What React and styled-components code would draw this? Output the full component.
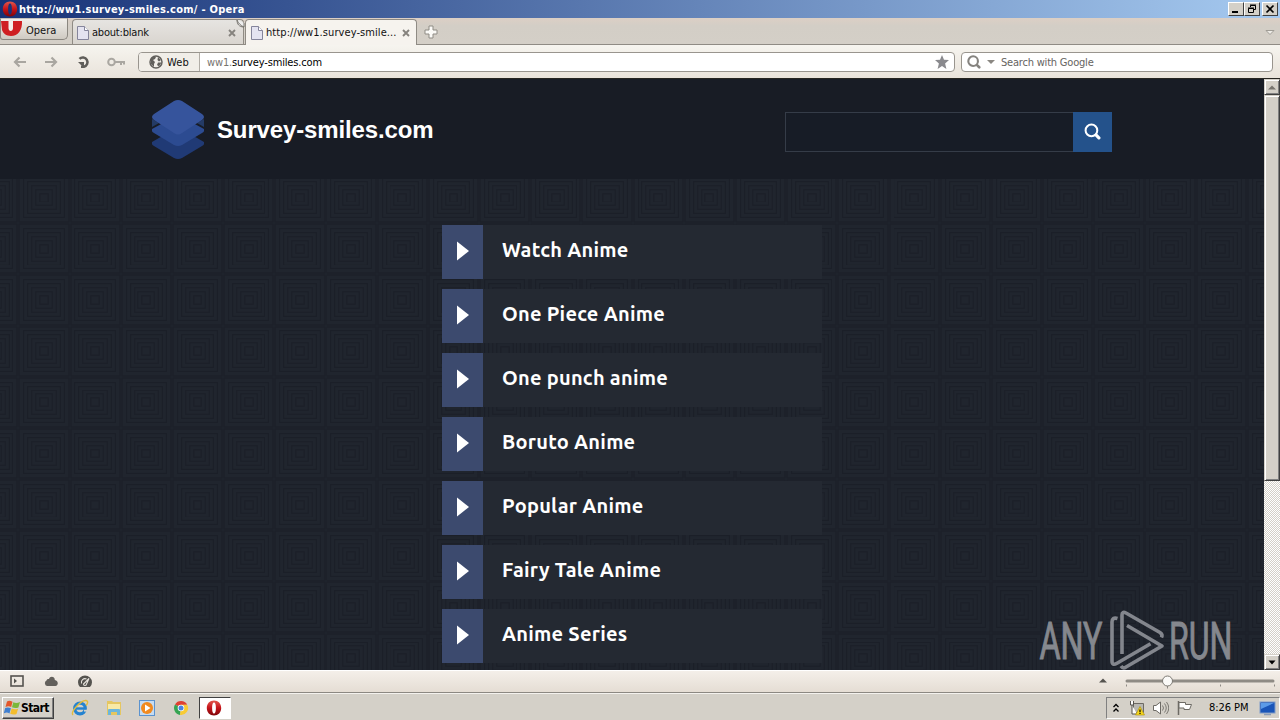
import styled, { createGlobalStyle } from "styled-components";

const tile = encodeURIComponent(
  `<svg xmlns="http://www.w3.org/2000/svg" width="51.2" height="51.2" viewBox="0 0 51.2 51.2"><rect width="51.2" height="51.2" fill="#20252e"/><g fill="none" stroke="#1b1f28" stroke-width="1.3"><rect x="1" y="1" width="49.2" height="49.2"/><rect x="5.5" y="5.5" width="40.2" height="40.2"/><rect x="9.5" y="9.5" width="32.2" height="32.2"/><rect x="13.5" y="13.5" width="24.2" height="24.2"/><rect x="17.5" y="17.5" width="16.2" height="16.2"/><rect x="21.5" y="21.5" width="8.2" height="8.2"/></g></svg>`
);

const links = [
  "Watch Anime",
  "One Piece Anime",
  "One punch anime",
  "Boruto Anime",
  "Popular Anime",
  "Fairy Tale Anime",
  "Anime Series",
];

function OperaLogo({ size }) {
  return (
    <svg width={size} height={size} viewBox="0 0 16 16">
      <defs>
        <linearGradient id="operaRed" x1="0" y1="0" x2="0" y2="1">
          <stop offset="0" stopColor="#e2574c" />
          <stop offset="0.5" stopColor="#c5131a" />
          <stop offset="1" stopColor="#7d0509" />
        </linearGradient>
      </defs>
      <path
        fillRule="evenodd"
        fill="url(#operaRed)"
        d="M8 .5C3.8.5.8 3.6.8 8s3 7.500 7.200 7.500 7.200-3.100 7.200-7.500S12.200.5 8 .5ZM8 2.500c1.300 0 1.900 2 1.900 5.500S9.300 13.500 8 13.500s-1.900-2-1.900-5.500S6.700 2.500 8 2.500Z"
      />
    </svg>
  );
}

function PageIcon() {
  return (
    <svg width="12" height="14" viewBox="0 0 12 14">
      <path d="M.5.5h7l4 4v9H.5Z" fill="#e4e3f0" stroke="#85859b" />
      <path d="M7.500.5v4h4" fill="#fff" stroke="#85859b" />
    </svg>
  );
}

function CloseIcon() {
  return (
    <svg width="8" height="8" viewBox="0 0 8 8">
      <path d="M1 1l6 6M7 1L1 7" stroke="#86837e" strokeWidth="1.900" />
    </svg>
  );
}

function Arrow({ left }) {
  return (
    <svg width="14" height="12" viewBox="0 0 14 12">
      <path
        d={left ? "M13 6H2M6.500 1.500L2 6l4.500 4.500" : "M1 6h11M7.500 1.500L12 6l-4.500 4.500"}
        fill="none"
        stroke="#a9a6a0"
        strokeWidth="2.200"
      />
    </svg>
  );
}

function Glass({ size, color, thick }) {
  return (
    <svg width={size} height={size} viewBox="0 0 16 16">
      <circle cx="7" cy="7" r="5.500" fill="none" stroke={color} strokeWidth={thick} />
      <path d="M11.500 11.500L14 14" stroke={color} strokeWidth="3" strokeLinecap="round" />
    </svg>
  );
}

function TitleBar() {
  return (
    <Title>
      <OperaLogo size={16} />
      <TitleText>http://ww1.survey-smiles.com/ - Opera</TitleText>
      <WinButton>
        <svg width="12" height="10" viewBox="0 0 12 10">
          <path d="M2 8h6" stroke="#000" strokeWidth="2" />
        </svg>
      </WinButton>
      <WinButton>
        <svg width="12" height="10" viewBox="0 0 12 10">
          <path d="M4.500 3V1.500h5v4H8M4 1h6" fill="none" stroke="#000" />
          <path d="M2.500 4.500h5v4h-5ZM2 4h6" fill="none" stroke="#000" />
        </svg>
      </WinButton>
      <WinButton gap={2}>
        <svg width="12" height="10" viewBox="0 0 12 10">
          <path d="M2.500 1.500l7 7M9.500 1.500l-7 7" stroke="#000" strokeWidth="1.700" />
        </svg>
      </WinButton>
    </Title>
  );
}

function Tabs() {
  return (
    <TabBar>
      <OperaButton>
        <svg width="22" height="16" viewBox="0 0 22 16">
          <path d="M0 0h8.500v6c0 3 3.500 3 3.500 0V0h9c.5 9-4 15-11 15C5 15 2 12 1 9Z" fill="#cf1f22" />
          <path d="M7.500 0H12v7c0 4-4.500 4-4.500 0Z" fill="#f3efea" />
        </svg>
        <Label spacing={0}>Opera</Label>
      </OperaButton>
      <Tab>
        <PageIcon />
        <TabLabel spacing={-0.2}>about:blank</TabLabel>
        <CloseIcon />
        <Fold width="9" height="9" viewBox="0 0 9 9">
          <path d="M1 0c1 3 4 6 7 7M1 0c0 4 2 7 7 7V3" fill="#eee" stroke="#77746e" />
        </Fold>
      </Tab>
      <Tab active>
        <PageIcon />
        <TabLabel spacing={0.08}>http://ww1.survey-smile...</TabLabel>
        <CloseIcon />
      </Tab>
      <NewTab width="14" height="14" viewBox="0 0 14 14">
        <path d="M5 1h4v4h4v4H9v4H5V9H1V5h4Z" fill="#fbfaf7" stroke="#8f8c85" />
      </NewTab>
      <TabMenu width="10" height="7" viewBox="0 0 10 7">
        <path d="M1 1.500h8L5 5.500Z" fill="#eeece7" stroke="#a09d96" />
      </TabMenu>
    </TabBar>
  );
}

function Toolbar() {
  return (
    <Tools>
      <NavIcons>
        <Arrow left />
        <Arrow />
        <svg width="14" height="14" viewBox="0 0 14 14">
          <path d="M2.500 3.800A4.700 4.700 0 1 1 7 11.700H4" fill="none" stroke="#605e5a" strokeWidth="2.500" />
          <path d="M1 7h6v6Z" fill="#605e5a" />
        </svg>
        <svg width="19" height="10" viewBox="0 0 19 10">
          <circle cx="4.500" cy="5" r="3.300" fill="none" stroke="#aaa7a1" strokeWidth="2" />
          <path d="M8 5h10M14 5v3M17 5v2.500" stroke="#aaa7a1" strokeWidth="2" />
        </svg>
      </NavIcons>
      <Address>
        <Web>
          <svg width="14" height="14" viewBox="0 0 14 14">
            <circle cx="7" cy="7" r="6" fill="#f1eee8" stroke="#62605c" strokeWidth="1.500" />
            <path d="M2 4l3-2.500L7 2 6 4 4 5l2 2-1 2 0 3-3-3ZM9 2l3 3-2 1.500L8.500 5ZM9 7.500h3.500L10 11.500 8 10Z" fill="#62605c" />
          </svg>
          <Label spacing={0.1}>Web</Label>
        </Web>
        <Url>
          <span>ww1.</span>survey-smiles.com
        </Url>
        <svg width="14" height="14" viewBox="0 0 14 14">
          <path d="M7 0l2 4.800 5 .3-3.900 3.300L11.400 14 7 11l-4.400 3 1.300-5.600L0 5.100l5-.3Z" fill="#8a8a8e" />
        </svg>
      </Address>
      <SearchBox>
        <Glass size={14} color="#85837f" thick={2.4} />
        <svg width="8" height="5" viewBox="0 0 8 5">
          <path d="M0 0h8L4 4Z" fill="#8a8782" />
        </svg>
        <Label color="#66645f" spacing={-0.2}>Search with Google</Label>
      </SearchBox>
    </Tools>
  );
}

function Watermark() {
  return (
    <Mark width="200" height="68" viewBox="1035 604 200 68">
      <g
        fill="#85888e"
        stroke="#85888e"
        strokeWidth="1"
        fontFamily="'Liberation Sans Narrow', Roboto, sans-serif"
        fontSize="51"
      >
        <text x="1039.500" y="658.500" textLength="63" lengthAdjust="spacingAndGlyphs">ANY</text>
        <text x="1169" y="658.500" textLength="63.500" lengthAdjust="spacingAndGlyphs">RUN</text>
      </g>
      <g fill="none" stroke="#83868d" strokeWidth="3.600" strokeLinejoin="round">
        <path d="M1117.500 618.500q-5.500-1.500-5.500 3.500v39q0 5 5 2.200l33.500-19.500" />
        <path d="M1122 654v-39q0-4 4-2l34 19.500q3 2 1.500 5" />
        <path d="M1127 625.500l35 20.500-36 21q-3 2-5-1" />
      </g>
    </Mark>
  );
}

function Site() {
  return (
    <Page>
      <Header>
        <svg width="54" height="62" viewBox="151 98 54 62">
          <path d="M152 142l26-15 26 15v2q0 1-2 2l-20 12q-4 2-8 0l-20-12q-2-1-2-2Z" fill="#203a75" />
          <path d="M152 129l26-14 26 14v2q0 1-2 2l-20 12q-4 2-8 0l-20-12q-2-1-2-2Z" fill="#2c4b91" />
          <path d="M152 119v8l7-4ZM204 119v8l-7-4Z" fill="#243b66" />
          <path d="M174 101q4-2 8 0l20 13q4 3 0 6l-20 13q-4 3-8 0l-20-13q-4-3 0-6Z" fill="#36549c" />
        </svg>
        <Brand>Survey-smiles.com</Brand>
        <Search>
          <SearchField />
          <SearchButton>
            <Glass size={17} color="#fff" thick={1.9} />
          </SearchButton>
        </Search>
      </Header>
      <List>
        {links.map((text) => (
          <Item key={text}>
            <Play>
              <svg width="12" height="20" viewBox="0 0 12 20">
                <path d="M0 .5L12 10 0 19.500Z" fill="#fff" />
              </svg>
            </Play>
            <ItemText>{text}</ItemText>
          </Item>
        ))}
      </List>
      <Watermark />
    </Page>
  );
}

function ScrollBar() {
  return (
    <Scroll>
      <ScrollButton height={16}>
        <svg width="8" height="5" viewBox="0 0 8 5">
          <path d="M0 4.500h8L4 .5Z" fill="#77746e" />
        </svg>
      </ScrollButton>
      <ScrollButton height={386} />
      <Track />
      <ScrollButton height={16}>
        <svg width="8" height="5" viewBox="0 0 8 5">
          <path d="M.5.5h7L4 4.500Z" fill="#000" />
        </svg>
      </ScrollButton>
    </Scroll>
  );
}

function StatusBar() {
  return (
    <Status>
      <StatusIcons>
        <svg width="14" height="12" viewBox="0 0 14 12">
          <rect x="1" y="1" width="12" height="10" fill="none" stroke="#55534f" strokeWidth="1.600" />
          <path d="M4 3.500v5L7 6Z" fill="#55534f" />
        </svg>
        <svg width="14" height="12" viewBox="0 0 14 12">
          <path d="M3 11a3 3 0 0 1-.5-5.500C3 3.500 5 4 5 4c1-3.500 6-2.500 5.800 1C14.800 5.500 14.500 11 11.500 11Z" fill="#63605c" />
        </svg>
        <svg width="14" height="12" viewBox="0 0 14 12">
          <path d="M2 12a7 6.800 0 1 1 10 0Z" fill="#55534f" />
          <path d="M3.500 8.500a3.700 3.700 0 0 1 5-4.500M5.500 9a1.500 1.500 0 0 0 3 0L11 3.500Z" fill="none" stroke="#e9e5df" strokeWidth="1.100" />
        </svg>
      </StatusIcons>
      <svg width="182" height="20" viewBox="1096 671.500 182 20">
        <path d="M1099 683h8l-4-4Z" fill="#55534f" />
        <path d="M1127 681.500h146" stroke="#8f8b85" strokeWidth="3" strokeLinecap="round" />
        <path d="M1126.500 685v2M1167.500 686v3M1220.500 685v2M1274.500 685v2" stroke="#8f8b85" />
        <circle cx="1167.500" cy="681.500" r="5" fill="#fbfaf8" stroke="#7c7973" />
      </svg>
    </Status>
  );
}

function TaskBar() {
  return (
    <Tasks>
      <Start>
        <svg width="16" height="16" viewBox="0 0 16 16">
          <path d="M3 1.500c2-1.200 3.500-.7 5.500.3L7.200 7C5.500 6 3.500 6 1.500 7Z" fill="#e4572a" />
          <path d="M9.300 2.300c2 1 4.300 1 6.700-.3l-1.600 5.500c-2.300 1-4.300.6-6.400-.2Z" fill="#7bb83a" />
          <path d="M1.200 8c2-1 4-.6 5.700.3L5.500 13.500C3.500 12.300 2 12.300-.3 13.500Z" fill="#3f7fd0" />
          <path d="M7.700 8.600c2.300 1 4.300 1 6.400.1L12.500 14c-2 1-4.300.7-6.300-.2Z" fill="#f3bd2c" />
        </svg>
        Start
      </Start>
      <Quick>
        <svg width="18" height="18" viewBox="0 0 18 18">
          <circle cx="9" cy="9.500" r="5.300" fill="none" stroke="#2583d0" strokeWidth="3.200" />
          <path d="M5 9.500h9" stroke="#2583d0" strokeWidth="2.400" />
          <path d="M13 11.700h4" stroke="#d4d0c8" strokeWidth="1.800" />
          <path d="M2 16C-1 13 10 1 15 1.500c3 .5 1 4 0 5" fill="none" stroke="#e2bc3c" strokeWidth="1.400" />
        </svg>
        <svg width="18" height="18" viewBox="0 0 18 18">
          <path d="M2 4V2h5l1 1h8v13H2Z" fill="#e5c661" />
          <path d="M3 5h12v8H3Z" fill="#f8e9a6" />
          <path d="M3 16v-5q0-1 1-1h10q1 0 1 1v5h-3v-3H6v3Z" fill="#6cb6dc" />
        </svg>
        <svg width="18" height="18" viewBox="0 0 18 18">
          <rect x="1.500" y="1.500" width="15" height="15" fill="#c6dcf2" stroke="#5b93cf" />
          <circle cx="9" cy="9" r="6" fill="#f18a1f" />
          <path d="M7 5.500v7L12.500 9Z" fill="#fff" />
        </svg>
        <svg width="18" height="18" viewBox="0 0 18 18">
          <path d="M9 9L3 5.500a7 7 0 0 1 12.200.2L9 6Z" fill="#df4033" />
          <path d="M9 9l-1 7A7 7 0 0 1 3 5.500Z" fill="#35a452" />
          <path d="M9 9V5.700h6.200A7 7 0 0 1 8 16Z" fill="#f8cb34" />
          <circle cx="9" cy="9" r="3.300" fill="#fff" />
          <circle cx="9" cy="9" r="2.500" fill="#4b83e0" />
        </svg>
      </Quick>
      <RunningApp>
        <OperaLogo size={16} />
      </RunningApp>
      <Tray>
        <svg width="8" height="10" viewBox="0 0 8 10">
          <path d="M1.500 4L4 1.500 6.500 4M1.500 8.500L4 6l2.500 2.500" fill="none" stroke="#000" strokeWidth="1.300" />
        </svg>
        <svg width="16" height="16" viewBox="0 0 16 16">
          <path d="M4.500 3.500h10v9h-10Z" fill="#b9b8b2" stroke="#6d6a64" />
          <path d="M1.500 1v4h3V1M3 5v9h5" fill="#fff" stroke="#55534f" />
          <path d="M11 6.500l4.500 8.500h-9Z" fill="#f6d61c" stroke="#a88c0c" strokeWidth=".6" />
          <path d="M11 9.500v2.800M11 13v1" stroke="#000" strokeWidth="1.200" />
        </svg>
        <svg width="16" height="16" viewBox="0 0 16 16">
          <path d="M.5 5.500H3L7.500 2v12L3 10.500H.5Z" fill="#fff" stroke="#6d6a64" />
          <path d="M9.500 5.500q2 2.500 0 5M11.500 3.500q3.500 4.500 0 9M13.500 2q4.500 6 0 12" fill="none" stroke="#7b7872" />
        </svg>
        <svg width="16" height="16" viewBox="0 0 16 16">
          <path d="M1.500 1v14" stroke="#6d6a64" strokeWidth="1.500" />
          <path d="M2 2.500h6.500v2h6l-2 5H7V8H2Z" fill="#fff" stroke="#6d6a64" />
        </svg>
        <Clock>8:26 PM</Clock>
        <svg width="17" height="16" viewBox="0 0 17 16">
          <rect x="1" y="2" width="15" height="11" fill="#1a55b8" stroke="#7e9cc9" />
          <path d="M2 3h13L2 9Z" fill="#5c9be8" />
          <path d="M5 14.500h7" stroke="#8a9bb6" strokeWidth="1.500" />
        </svg>
      </Tray>
    </Tasks>
  );
}

export default function App() {
  return (
    <Screen>
      <GlobalStyle />
      <TitleBar />
      <Tabs />
      <Toolbar />
      <Content>
        <Site />
        <ScrollBar />
      </Content>
      <StatusBar />
      <TaskBar />
    </Screen>
  );
}

const GlobalStyle = createGlobalStyle`
  * {
    box-sizing: border-box;
  }
  body {
    margin: 0;
    overflow: hidden;
  }
  svg {
    display: block;
    flex-shrink: 0;
  }
`;

const Screen = styled.div`
  width: 1280px;
  height: 720px;
  display: flex;
  flex-direction: column;
  background-color: #d4d0c8;
  font-family: Tahoma, "DejaVu Sans Condensed", "DejaVu Sans", sans-serif;
  font-size: 11px;
  color: #000;
`;

const Label = styled.span`
  color: ${({ color }) => color || "#111"};
  letter-spacing: ${({ spacing }) => spacing}px;
  white-space: nowrap;
`;

const Title = styled.div`
  height: 18px;
  display: flex;
  align-items: center;
  padding: 0 2px;
  background: linear-gradient(to right, #173277, #a6caf0);
`;

const TitleText = styled.span`
  flex: 1;
  margin-left: 1px;
  color: #fff;
  font-weight: bold;
  letter-spacing: 0.26px;
  white-space: nowrap;
`;

const WinButton = styled.div`
  width: 16px;
  height: 14px;
  margin-left: ${({ gap }) => gap || 0}px;
  display: flex;
  align-items: center;
  justify-content: center;
  background-color: #d4d0c8;
  border: 1px solid;
  border-color: #fff #404040 #404040 #fff;
`;

const TabBar = styled.div`
  height: 27px;
  display: flex;
  align-items: flex-end;
  background: linear-gradient(#dccfc5, #d3cec6 30%, #d4cfc7);
  border-bottom: 1px solid #8f8b84;
`;

const OperaButton = styled.div`
  width: 68px;
  height: 22px;
  margin-right: 4px;
  align-self: flex-start;
  display: flex;
  align-items: center;
  gap: 3px;
  padding-top: 2px;
  background: linear-gradient(#f0eeea, #cfcac2);
  border: 1px solid #8b8780;
  border-top-color: #c5c0b9;
  border-radius: 0 0 5px 3px;
  svg {
    align-self: flex-start;
  }
`;

const Tab = styled.div`
  position: relative;
  width: 172px;
  height: ${({ active }) => (active ? 26 : 25)}px;
  margin-right: 1px;
  margin-bottom: ${({ active }) => (active ? -1 : 0)}px;
  padding: ${({ active }) => (active ? "0 6px 0 5px" : "1px 7px 0 4px")};
  display: flex;
  align-items: center;
  background: ${({ active }) => (active ? "#f6f3ee" : "linear-gradient(#e6e4e1, #d9d5cf)")};
  border: 1px solid #8f8b84;
  border-bottom: none;
  border-radius: 4px 4px 0 0;
`;

const TabLabel = styled(Label)`
  flex: 1;
  margin-left: 3px;
`;

const Fold = styled.svg`
  position: absolute;
  top: 0;
  right: -2px;
`;

const NewTab = styled.svg`
  margin: 0 auto 5px 6px;
`;

const TabMenu = styled.svg`
  margin: 0 5px 8px 0;
`;

const Tools = styled.div`
  height: 34px;
  display: flex;
  align-items: center;
  padding: 1px 7px 0 13px;
  background: linear-gradient(#f6f4ef, #e9e3da);
  border-bottom: 1px solid #26241f;
`;

const NavIcons = styled.div`
  width: 125px;
  display: flex;
  align-items: center;
  gap: 18px;
  svg:nth-child(2) {
    margin-left: -1px;
    margin-right: 1px;
  }
  svg:nth-child(4) {
    margin-left: -2px;
  }
`;

const Address = styled.div`
  width: 817px;
  height: 20px;
  margin-right: 6px;
  padding-right: 5px;
  display: flex;
  align-items: center;
  overflow: hidden;
  background-color: #fff;
  border: 1px solid #99958e;
  border-radius: 4px;
`;

const Web = styled.div`
  width: 61px;
  height: 100%;
  padding-left: 10px;
  display: flex;
  align-items: center;
  gap: 4px;
  background-color: #f1eee8;
  border-right: 1px solid #b1ada6;
`;

const Url = styled.div`
  flex: 1;
  margin-left: 7px;
  letter-spacing: -0.15px;
  span {
    color: #77746f;
  }
`;

const SearchBox = styled.div`
  width: 312px;
  height: 20px;
  padding-left: 5px;
  display: flex;
  align-items: center;
  gap: 6px;
  background-color: #fff;
  border: 1px solid #99958e;
  border-radius: 4px;
`;

const Content = styled.div`
  height: 591px;
  display: flex;
`;

const Page = styled.div`
  position: relative;
  width: 1264px;
  height: 591px;
  background-color: #20252e;
  background-image: url("data:image/svg+xml,${tile}");
  background-size: 51.2px 51.2px;
  background-position: 18.4px 41.800px;
`;

const Header = styled.div`
  height: 100px;
  padding: 19px 152px 0 151px;
  display: flex;
  align-items: flex-start;
  background-color: #181c25;
`;

const Brand = styled.div`
  margin: 18px auto 0 12px;
  color: #fff;
  font: bold 24px/28px "Liberation Sans", Arial, sans-serif;
  letter-spacing: -0.14px;
`;

const Search = styled.div`
  width: 327px;
  height: 40px;
  margin-top: 14px;
  display: flex;
`;

const SearchField = styled.div`
  flex: 1;
  border: 1px solid #353c48;
  border-right: none;
  background-color: #171c26;
`;

const SearchButton = styled.div`
  width: 39px;
  padding-bottom: 1px;
  display: flex;
  align-items: center;
  justify-content: center;
  background-color: #24528b;
`;

const List = styled.div`
  width: 380px;
  margin: 0 0 0 442px;
  padding-top: 46px;
  display: flex;
  flex-direction: column;
  gap: 10px;
`;

const Item = styled.div`
  height: 54px;
  display: flex;
  align-items: flex-start;
  background-color: #242932;
`;

const ItemText = styled.span`
  margin: 10px 0 0 19px;
  color: #fff;
  font: 600 20px/30px Ubuntu, "Noto Sans", sans-serif;
  letter-spacing: 0.25px;
  white-space: nowrap;
`;

const Play = styled.div`
  width: 41px;
  height: 54px;
  padding-bottom: 2px;
  display: flex;
  align-items: center;
  justify-content: center;
  background-color: #3c4a6e;
`;

const Mark = styled.svg`
  position: absolute;
  right: 29px;
  bottom: -2px;
  overflow: visible;
`;

const Scroll = styled.div`
  width: 16px;
  display: flex;
  flex-direction: column;
`;

const ScrollButton = styled.div`
  height: ${({ height }) => height}px;
  display: flex;
  align-items: center;
  justify-content: center;
  background-color: #d4d0c8;
  border: 1px solid;
  border-color: #d4d0c8 #404040 #404040 #d4d0c8;
  box-shadow: inset 1px 1px #fff, inset -1px -1px #808080;
`;

const Track = styled.div`
  flex: 1;
  background: repeating-conic-gradient(#fff 0 25%, #d4d0c8 0 50%) 0 0 / 2px 2px;
`;

const Status = styled.div`
  height: 23px;
  padding: 0 2px 0 10px;
  display: flex;
  justify-content: space-between;
  background: linear-gradient(#f4efe9, #e5ddd4);
  border-top: 1px solid #fff;
  border-bottom: 1px solid #8c8882;
`;

const StatusIcons = styled.div`
  display: flex;
  gap: 20px;
  padding-top: 4px;
`;

const Tasks = styled.div`
  height: 27px;
  padding: 2px 0 1px 2px;
  display: flex;
  align-items: center;
  background-color: #d4d0c8;
  border-top: 1px solid #f4f2ee;
`;

const Start = styled.div`
  width: 52px;
  height: 22px;
  display: flex;
  align-items: center;
  gap: 1px;
  padding-left: 1px;
  font-size: 12px;
  font-weight: bold;
  letter-spacing: -0.6px;
  border: 1px solid;
  border-color: #fff #404040 #404040 #fff;
  box-shadow: inset -1px -1px #808080;
`;

const Quick = styled.div`
  display: flex;
  gap: 15.500px;
  margin: 0 9px 0 17px;
`;

const RunningApp = styled.div`
  width: 32px;
  height: 22px;
  padding-right: 2px;
  display: flex;
  align-items: center;
  justify-content: center;
  background-color: #fff;
  border: 1px solid;
  border-color: #404040 #fff #fff #404040;
`;

const Tray = styled.div`
  width: 174px;
  height: 22px;
  margin-left: auto;
  padding: 0 3px 0 5px;
  display: flex;
  align-items: center;
  gap: 8px;
  border: 1px solid;
  border-color: #808080 #fff #fff #808080;
  svg:first-child {
    margin-right: 1px;
  }
`;

const Clock = styled.span`
  flex: 1;
  margin-left: 8px;
  letter-spacing: -0.05px;
  white-space: nowrap;
`;
